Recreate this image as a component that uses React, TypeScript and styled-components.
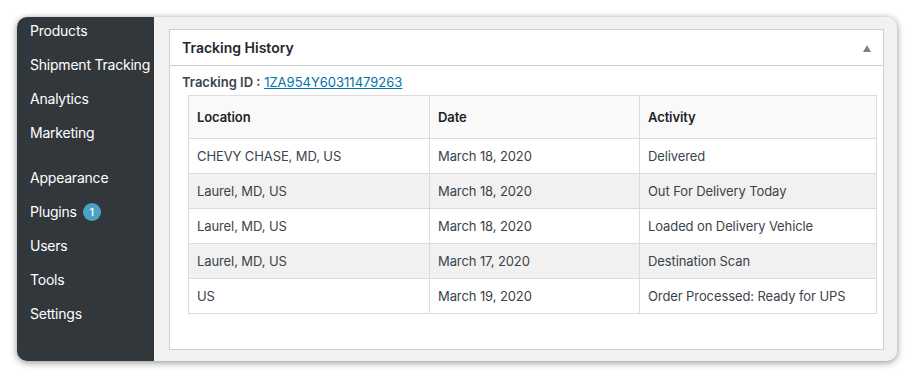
import React from "react";
import styled, { createGlobalStyle } from "styled-components";

const Global = createGlobalStyle`
  html, body { margin: 0; padding: 0; background: #ffffff; }
  body { font-family: Inter, "Noto Sans", "Liberation Sans", sans-serif; -webkit-font-smoothing: antialiased; }
  * { box-sizing: border-box; }
`;

const Page = styled.div`
  width: 914px;
  height: 377px;
  padding: 17px 17px 16px 17px;
`;

const Window = styled.div`
  width: 880px;
  height: 344px;
  border-radius: 10px;
  overflow: hidden;
  display: flex;
  background: #f1f1f1;
  box-shadow: 0 1px 6px rgba(0, 0, 0, 0.35), 0 3px 10px rgba(0, 0, 0, 0.12);
`;

const Sidebar = styled.nav`
  width: 137px;
  flex: none;
  background: #32373c;
  display: flex;
  flex-direction: column;
`;

const MenuItem = styled.div`
  height: 34px;
  padding: 5px 0 11px 13px;
  line-height: 18px;
  font-size: 14px;
  letter-spacing: -0.22px;
  color: #ffffff;
  white-space: nowrap;
  display: flex;
  align-items: center;
  gap: 6px;
`;

const Separator = styled.div`
  height: 11px;
`;

const Badge = styled.span`
  display: inline-flex;
  align-items: center;
  justify-content: center;
  width: 18px;
  height: 18px;
  border-radius: 50%;
  background: #4aa3c4;
  color: #ffffff;
  font-size: 11px;
  font-weight: 500;
  letter-spacing: 0;
`;

const Main = styled.main`
  flex: 1;
  padding: 12px 14px 12px 15px;
`;

const Panel = styled.section`
  background: #ffffff;
  border: 1px solid #ccd0d4;
  height: 321px;
  display: flex;
  flex-direction: column;
`;

const PanelHeader = styled.header`
  height: 36px;
  border-bottom: 1px solid #ccd0d4;
  display: flex;
  align-items: center;
  justify-content: space-between;
  padding: 0 12px 0 12px;
`;

const Title = styled.h2`
  margin: 0;
  font-size: 14px;
  font-weight: 600;
  color: #23282d;
`;

const Toggle = styled.span`
  width: 0;
  height: 0;
  border-left: 4px solid transparent;
  border-right: 4px solid transparent;
  border-bottom: 7px solid #7e8287;
  margin-top: 1px;
`;

const PanelBody = styled.div`
  padding: 6px 6px 0 12px;
`;

const TrackingLine = styled.div`
  font-size: 13px;
  line-height: 18px;
  color: #3c434a;
  height: 23px;
  padding-top: 1px;
`;

const Label = styled.strong`
  font-weight: 600;
`;

const TrackLink = styled.a`
  color: #0073aa;
  text-decoration: underline;
`;

const Table = styled.table`
  margin-left: 6px;
  width: 688px;
  border-collapse: collapse;
  font-size: 13px;
  letter-spacing: -0.1px;
  color: #3c434a;
  table-layout: fixed;
`;

const Th = styled.th<{ $w: number }>`
  width: ${(p) => p.$w}px;
  height: 43px;
  text-align: left;
  font-weight: 600;
  color: #1d2327;
  background: #f9f9f9;
  border: 1px solid #dcdcde;
  padding: 0 8px;
`;

const Row = styled.tr<{ $striped: boolean }>`
  background: ${(p) => (p.$striped ? "#f1f1f1" : "#ffffff")};
`;

const Td = styled.td`
  height: 35px;
  border: 1px solid #dcdcde;
  padding: 0 8px;
  white-space: nowrap;
`;

const rows = [
  ["CHEVY CHASE, MD, US", "March 18, 2020", "Delivered"],
  ["Laurel, MD, US", "March 18, 2020", "Out For Delivery Today"],
  ["Laurel, MD, US", "March 18, 2020", "Loaded on Delivery Vehicle"],
  ["Laurel, MD, US", "March 17, 2020", "Destination Scan"],
  ["US", "March 19, 2020", "Order Processed: Ready for UPS"],
];

export default function App() {
  return (
    <>
      <Global />
      <Page>
        <Window>
          <Sidebar>
            <MenuItem>Products</MenuItem>
            <MenuItem>Shipment Tracking</MenuItem>
            <MenuItem>Analytics</MenuItem>
            <MenuItem>Marketing</MenuItem>
            <Separator />
            <MenuItem>Appearance</MenuItem>
            <MenuItem>
              Plugins <Badge>1</Badge>
            </MenuItem>
            <MenuItem>Users</MenuItem>
            <MenuItem>Tools</MenuItem>
            <MenuItem>Settings</MenuItem>
          </Sidebar>
          <Main>
            <Panel>
              <PanelHeader>
                <Title>Tracking History</Title>
                <Toggle />
              </PanelHeader>
              <PanelBody>
                <TrackingLine>
                  <Label>Tracking ID :</Label>{" "}
                  <TrackLink href="#">1ZA954Y60311479263</TrackLink>
                </TrackingLine>
                <Table>
                  <thead>
                    <tr>
                      <Th $w={241}>Location</Th>
                      <Th $w={210}>Date</Th>
                      <Th $w={237}>Activity</Th>
                    </tr>
                  </thead>
                  <tbody>
                    {rows.map((r, i) => (
                      <Row key={i} $striped={i % 2 === 1}>
                        {r.map((c, j) => (
                          <Td key={j}>{c}</Td>
                        ))}
                      </Row>
                    ))}
                  </tbody>
                </Table>
              </PanelBody>
            </Panel>
          </Main>
        </Window>
      </Page>
    </>
  );
}
